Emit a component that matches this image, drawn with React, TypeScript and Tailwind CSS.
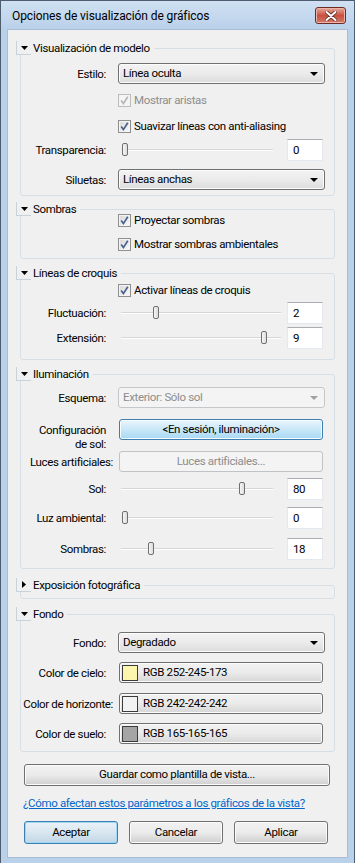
import React from "react";

const FONT = "font-['Segoe_UI',Roboto,'Liberation_Sans',sans-serif]";

function Arrow({ open = true }: { open?: boolean }) {
  return open ? (
    <svg width="7" height="4" viewBox="0 0 7 4">
      <path d="M0 0 H7 L3.5 4 Z" fill="#000" />
    </svg>
  ) : (
    <svg width="4" height="7" viewBox="0 0 4 7">
      <path d="M0 0 V7 L4 3.5 Z" fill="#000" />
    </svg>
  );
}

function Group({
  title,
  open = true,
  className = "",
  children,
}: {
  title: string;
  open?: boolean;
  className?: string;
  children?: React.ReactNode;
}) {
  return (
    <fieldset className={`mx-[12px] border border-[#d5dfe5] rounded-[3px] ${className}`}>
      <legend className="-ml-[5px] pr-[4px]">
        <div className="flex items-center h-[14px]">
          <span className="w-[15px] h-[14px] border-l border-b border-[#c9d2d8] flex items-center justify-center">
            <Arrow open={open} />
          </span>
          <span className="ml-[2px] leading-[14px] whitespace-nowrap">{title}</span>
        </div>
      </legend>
      {children}
    </fieldset>
  );
}

function Label({ text, w = "w-[85px]" }: { text: React.ReactNode; w?: string }) {
  return (
    <div className={`${w} shrink-0 flex justify-end text-right leading-[14px] whitespace-nowrap`}>
      <span>{text}</span>
    </div>
  );
}

function Select({ value, disabled = false }: { value: string; disabled?: boolean }) {
  return (
    <div
      className={`ml-[12px] w-[207px] h-[21px] rounded-[3px] border flex items-center justify-between pl-[4px] pr-[6px] ${
        disabled
          ? "border-[#c4c8cb] bg-[#f4f4f4] text-[#8d8d8d]"
          : "border-[#707070] bg-gradient-to-b from-[#f3f3f3] via-[#ebebeb] to-[#dcdcdc] shadow-[inset_0_0_0_1px_#fcfcfc]"
      }`}
    >
      <span>{value}</span>
      <svg width="8" height="4" viewBox="0 0 8 4">
        <path d="M0 0 H8 L4 4 Z" fill={disabled ? "#a0a0a0" : "#000"} />
      </svg>
    </div>
  );
}

function Check({ label, disabled = false, className = "" }: { label: string; disabled?: boolean; className?: string }) {
  return (
    <div className={`flex items-center h-[16px] pl-[97px] ${className}`}>
      <span
        className={`w-[13px] h-[13px] shrink-0 border flex items-center justify-center ${
          disabled
            ? "border-[#bdbdbd] bg-[#f4f4f4]"
            : "border-[#8e8f8f] bg-gradient-to-br from-[#d8d8d8] to-[#fafafa] shadow-[inset_0_0_0_1px_#f4f4f4]"
        }`}
      >
        <svg width="11" height="11" viewBox="0 0 11 11">
          <path
            d="M2.2 5.6 L4.4 8.6 L8.8 1.8"
            stroke={disabled ? "#b5b5b5" : "#4a5f8e"}
            strokeWidth="1.7"
            fill="none"
          />
        </svg>
      </span>
      <span className={`ml-[3px] leading-[14px] whitespace-nowrap ${disabled ? "text-[#8d8d8d]" : ""}`}>{label}</span>
    </div>
  );
}

function Field({ value }: { value: string }) {
  return (
    <div className="w-[36px] h-[22px] shrink-0 bg-white border border-[#e3e9ef] border-t-[#abadb3] pl-[5px] pt-[3px] leading-[14px]">
      {value}
    </div>
  );
}

function Slider({ value, max, long = false }: { value: number; max: number; long?: boolean }) {
  const range = long ? 154 : 146;
  const left = 1 + Math.round((value / max) * range);
  return (
    <div className={`ml-[12px] relative h-[22px] flex items-center ${long ? "w-[166px]" : "w-[158px]"}`}>
      <div className="ml-[3px] flex-1 mr-[3px] h-[2px] bg-[#d6d6d6] border-b border-white" />
      <div
        className="absolute top-[4px] w-[6px] h-[13px] rounded-[2px] border border-[#707070] bg-gradient-to-r from-[#f6f6f6] to-[#dcdcdc]"
        style={{ left: left + 3 }}
      />
    </div>
  );
}

function SliderRow({
  label,
  value,
  max,
  long = false,
  className = "",
}: {
  label: string;
  value: number;
  max: number;
  long?: boolean;
  className?: string;
}) {
  return (
    <div className={`flex items-center ${className}`}>
      <Label text={label} />
      <Slider value={value} max={max} long={long} />
      <div className={long ? "ml-[3px]" : "ml-[11px]"}>
        <Field value={String(value)} />
      </div>
    </div>
  );
}

function Button({
  children,
  className = "",
  variant = "normal",
}: {
  children: React.ReactNode;
  className?: string;
  variant?: "normal" | "hot" | "disabled" | "default";
}) {
  const styles = {
    normal:
      "border-[#707070] bg-gradient-to-b from-[#f2f2f2] from-0% via-[#ebebeb] via-50% to-[#cfcfcf] shadow-[inset_0_0_0_1px_#fbfbfb]",
    hot: "border-[#3c7fb1] bg-gradient-to-b from-[#eaf6fd] via-[#c9e7f8] to-[#a7d9f5] shadow-[inset_0_0_0_1px_#f6fbfe]",
    disabled: "border-[#bfc3c6] bg-[#f4f4f4] text-[#8d8d8d]",
    default:
      "border-[#3c7fb1] bg-gradient-to-b from-[#eaf2f8] via-[#d9e6f0] to-[#c2d6e6] shadow-[inset_0_0_0_1px_#9ed8f3]",
  }[variant];
  return (
    <div className={`rounded-[3px] border flex items-center justify-center whitespace-nowrap ${styles} ${className}`}>
      {children}
    </div>
  );
}

function ColorRow({
  label,
  rgb,
  w,
  className = "",
}: {
  label: string;
  rgb: [number, number, number];
  w?: string;
  className?: string;
}) {
  return (
    <div className={`flex items-center ${className}`}>
      <Label text={label} w={w} />
      <div
        className={`${w ? "ml-[6px]" : "ml-[13px]"} w-[204px] h-[21px] rounded-[3px] border border-[#707070] bg-gradient-to-b from-[#f2f2f2] via-[#ebebeb] to-[#d6d6d6] shadow-[inset_0_0_0_1px_#fbfbfb] flex items-center pl-[2px]`}
      >
        <span
          className="w-[16px] h-[16px] border border-[#3c3c3c]"
          style={{ backgroundColor: `rgb(${rgb[0]},${rgb[1]},${rgb[2]})` }}
        />
        <span className="ml-[5px]">RGB {rgb.join("-")}</span>
      </div>
    </div>
  );
}

export default function App() {
  return (
    <div
      className={`${FONT} text-[11.5px] tracking-[-0.35px] text-black w-[355px] h-[863px] bg-[#bad1ea] border-x border-t border-[#4d5d70] flex flex-col`}
    >
      {/* Title bar */}
      <div className="h-[28px] shrink-0 flex items-center justify-between pl-[11px] pr-[8px] bg-gradient-to-b from-[#d0e0f2] to-[#bad1ea]">
        <span className="text-[12px] tracking-[-0.1px] pt-[1px]">Opciones de visualización de gráficos</span>
        <div className="mt-[1px] w-[31px] h-[17px] rounded-[3px] border border-[#6e2b25] bg-gradient-to-b from-[#e5a89e] via-[#c9503f] to-[#d57a68] shadow-[inset_0_0_0_1px_#eab6ab] flex items-center justify-center">
          <svg width="12" height="10" viewBox="0 0 12 10">
            <path d="M1.5 1 L10.5 9 M10.5 1 L1.5 9" stroke="#5a2a28" strokeWidth="3.6" strokeLinecap="round" />
            <path d="M1.5 1 L10.5 9 M10.5 1 L1.5 9" stroke="#fff" strokeWidth="2" strokeLinecap="round" />
          </svg>
        </div>
      </div>

      {/* Client area */}
      <div className="mx-[6px] border border-[#a9bdd4] bg-[#f0f0f0] h-[829px] flex flex-col">
        <Group title="Visualización de modelo" className="mt-[11px] pb-[5px]">
          <div className="flex items-center mt-[8px]">
            <Label text="Estilo:" />
            <Select value="Línea oculta" />
          </div>
          <Check label="Mostrar aristas" disabled className="mt-[8px]" />
          <Check label="Suavizar líneas con anti-aliasing" className="mt-[10px]" />
          <SliderRow label="Transparencia:" value={0} max={100} className="mt-[5px]" />
          <div className="flex items-center mt-[8px]">
            <Label text="Siluetas:" />
            <Select value="Líneas anchas" />
          </div>
        </Group>

        <Group title="Sombras" className="mt-[6px] pb-[6px]">
          <Check label="Proyectar sombras" className="-mt-[4px]" />
          <Check label="Mostrar sombras ambientales" className="mt-[8px]" />
        </Group>

        <Group title="Líneas de croquis" className="mt-[7px] pb-[10px]">
          <Check label="Activar líneas de croquis" className="mt-[2px]" />
          <SliderRow label="Fluctuación:" value={2} max={10} long className="mt-[4px]" />
          <SliderRow label="Extensión:" value={9} max={10} long className="mt-[3px]" />
        </Group>

        <Group title="Iluminación" className="mt-[7px] pb-[8px]">
          <div className="flex items-center mt-[6px]">
            <Label text="Esquema:" />
            <Select value="Exterior: Sólo sol" disabled />
          </div>
          <div className="flex items-start mt-[11px]">
            <div className="pt-[4px]">
              <Label
                text={
                  <>
                    Configuración
                    <br />
                    de sol:
                  </>
                }
              />
            </div>
            <Button variant="hot" className="ml-[13px] w-[204px] h-[21px]">
              &lt;En sesión, iluminación&gt;
            </Button>
          </div>
          <div className="flex items-center">
            <Label text="Luces artificiales:" w="w-[92px]" />
            <Button variant="disabled" className="ml-[6px] w-[204px] h-[21px]">
              Luces artificiales...
            </Button>
          </div>
          <SliderRow label="Sol:" value={80} max={100} className="mt-[6px]" />
          <SliderRow label="Luz ambiental:" value={0} max={100} className="mt-[7px]" />
          <SliderRow label="Sombras:" value={18} max={100} className="mt-[9px]" />
        </Group>

        <Group title="Exposición fotográfica" open={false} className="mt-[9px] pb-[6px]" />

        <Group title="Fondo" className="mt-[8px] pb-[7px]">
          <div className="flex items-center mt-[11px]">
            <Label text="Fondo:" />
            <Select value="Degradado" />
          </div>
          <ColorRow label="Color de cielo:" rgb={[252, 245, 173]} className="mt-[9px]" />
          <ColorRow label="Color de horizonte:" rgb={[242, 242, 242]} w="w-[92px]" className="mt-[10px]" />
          <ColorRow label="Color de suelo:" rgb={[165, 165, 165]} className="mt-[9px]" />
        </Group>

        <Button className="mt-[12px] ml-[16px] mr-[17px] h-[22px]">Guardar como plantilla de vista...</Button>

        <div className="mt-[9px] ml-[15px] h-[16px] leading-[16px] text-[#0066cc] underline whitespace-nowrap">
          ¿Cómo afectan estos parámetros a los gráficos de la vista?
        </div>

        <div className="mt-[10px] ml-[16px] flex gap-[11px]">
          <Button variant="default" className="w-[94px] h-[23px]">
            Aceptar
          </Button>
          <Button className="w-[94px] h-[23px]">Cancelar</Button>
          <Button className="w-[94px] h-[23px]">Aplicar</Button>
        </div>
      </div>
    </div>
  );
}
